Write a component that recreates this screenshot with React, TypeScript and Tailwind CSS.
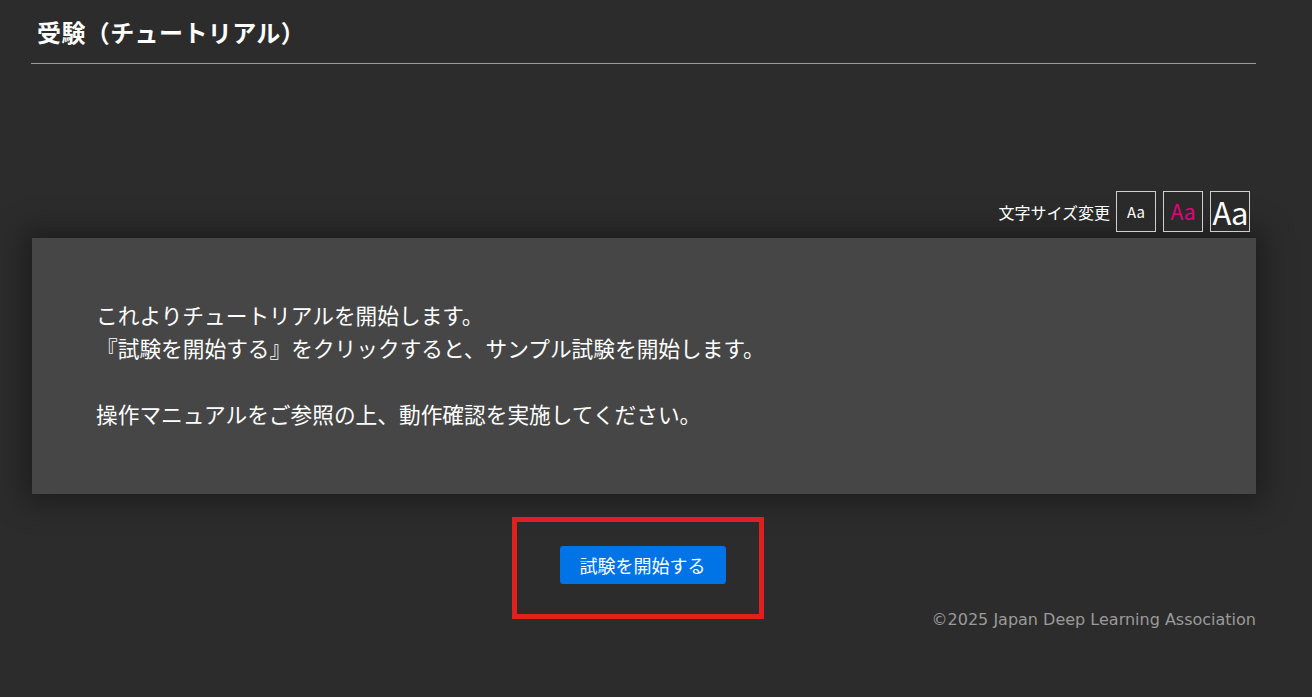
import React from "react";

export default function App() {
  const jp = { fontFamily: '"Noto Sans CJK JP", "Noto Sans", sans-serif' };
  return (
    <div className="min-h-[697px] w-full bg-[#2c2c2c] text-white" style={jp}>
      <div className="ml-[31px] w-[1225px]">
        <header className="flex h-[64px] items-center border-b border-[#9a9a9a] pl-[6px]">
          <h1 className="text-[24px] font-bold leading-none tracking-[0.4px] text-white">受験（チュートリアル）</h1>
        </header>

        <div className="mt-[127px] flex items-center justify-end gap-[7px] pr-[6px]">
          <span className="mr-[-1px] text-[16px] leading-none text-white">文字サイズ変更</span>
          <button className="flex h-[41px] w-[40px] items-center justify-center border border-[#cfcfcf] bg-[#2a2a2a] text-[15px] leading-none text-white">
            Aa
          </button>
          <button className="flex h-[41px] w-[40px] items-center justify-center border border-[#cfcfcf] bg-[#2a2a2a] text-[21px] leading-none text-[#e6007e]">
            Aa
          </button>
          <button className="flex h-[41px] w-[40px] items-center justify-center border border-[#cfcfcf] bg-[#2a2a2a] text-[31px] leading-none tracking-[-1px] text-white">
            Aa
          </button>
        </div>

        <section className="mt-[6px] ml-[1px] bg-[#464646] px-[64px] pt-[60px] pb-[64px] text-[21.7px] leading-[33px] text-white shadow-[0_0_28px_8px_rgba(0,0,0,0.35)]">
          <p>これよりチュートリアルを開始します。</p>
          <p>『試験を開始する』をクリックすると、サンプル試験を開始します。</p>
          <p>&nbsp;</p>
          <p>操作マニュアルをご参照の上、動作確認を実施してください。</p>
        </section>

        <div className="mt-[52px] flex justify-center">
          <div className="relative ml-[-2px]">
            <button className="h-[38px] w-[166px] rounded-[3px] bg-[#0073e6] text-[18px] leading-none text-white">
              試験を開始する
            </button>
            <div className="pointer-events-none absolute left-[-48px] right-[-38px] top-[-29px] bottom-[-35px] border-[5px] border-[#e01f1f]" />
          </div>
        </div>

        <footer className="mt-[24px] flex justify-end">
          <span className="text-[16px] leading-[24px] text-[#9a9a9a]" style={{ fontFamily: '"DejaVu Sans", Verdana, sans-serif' }}>
            ©2025 Japan Deep Learning Association
          </span>
        </footer>
      </div>
    </div>
  );
}
